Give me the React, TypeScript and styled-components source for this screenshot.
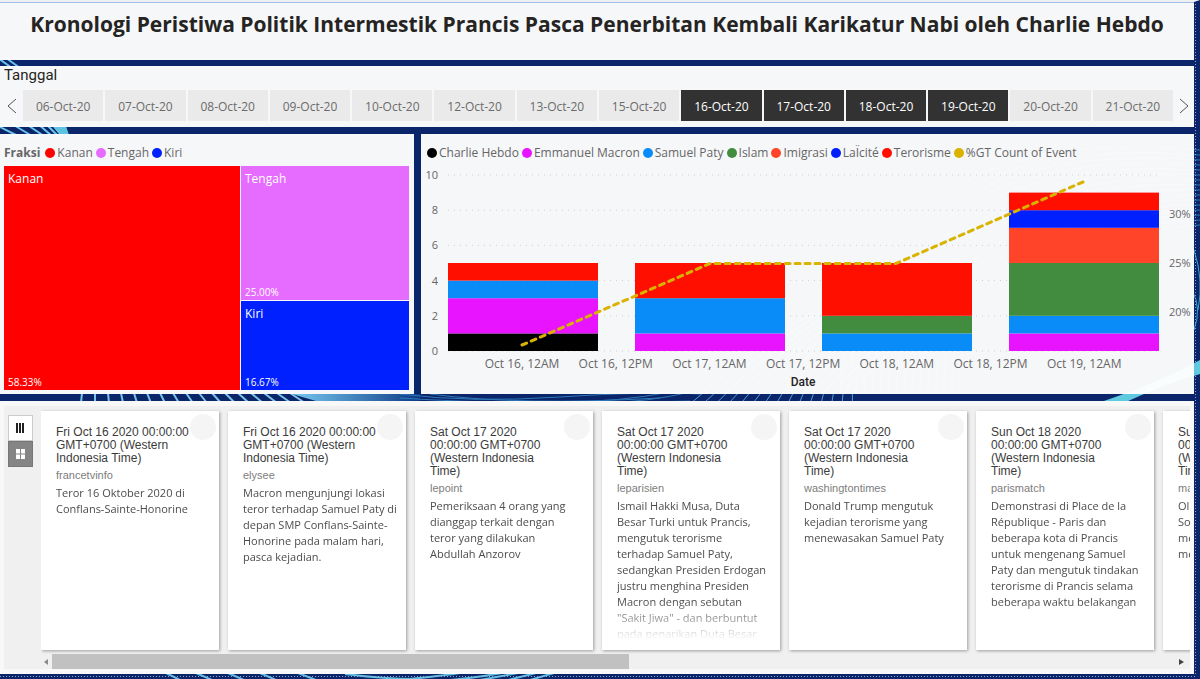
import React from "react";
import styled, { createGlobalStyle } from "styled-components";

const sans = `"Open Sans", "Noto Sans", sans-serif`;
const arial = `"Liberation Sans", Arial, sans-serif`;
const din = `Roboto, "Noto Sans", sans-serif`;

const colors = {
  navy: "#0a2569",
  panel: "rgba(254, 254, 254, 0.97)",
  text: "#666666",
  red: "#ff0f00",
  magenta: "#e814ff",
  sky: "#0a8cf8",
  green: "#418c3f",
  orange: "#ff4429",
  blue: "#0020ff",
  gold: "#d9b300",
};

const GlobalStyle = createGlobalStyle`
  * { box-sizing: border-box; }
  body { margin: 0; background: ${colors.navy}; font-family: ${sans}; color: ${colors.text}; }
  h1, h2, h3, p, ul { margin: 0; padding: 0; }
  button { font: inherit; border: 0; padding: 0; cursor: pointer; }
`;

const Page = styled.main`
  position: relative;
  isolation: isolate;
  overflow: hidden;
  min-height: 100vh;
  display: flex;
  flex-direction: column;
  gap: 7px;
  padding-right: 6px;
  padding-bottom: 5px;
  background: ${colors.navy};
`;

const Backdrop = styled.svg`
  position: absolute;
  inset: 0;
  z-index: -1;
  width: 100%;
  height: 100%;
`;

const Banner = styled.header`
  height: 60px;
  margin: 0 -6px -1px 0;
  border-right: 6px solid transparent;
  border-top: 2px solid #eef0f3;
  background: ${colors.panel};
  background-clip: padding-box;
  box-shadow: inset 0 1px 0 #9fbfe6;
`;

const Title = styled.h1`
  padding-top: 7px;
  font-size: 21px;
  line-height: 30px;
  font-weight: 700;
  color: #252423;
  text-align: center;
  white-space: nowrap;
`;

const Panel = styled.section`
  background: ${colors.panel};
  min-width: 0;
`;

const DatePanel = styled(Panel)`
  padding-bottom: 6px;
`;

const DateHeading = styled.h2`
  padding-left: 4px;
  font: 400 15px/18px ${din};
  color: #252423;
  margin-bottom: 6px;
`;

const DateRow = styled.div`
  display: grid;
  grid-template-columns: 23px 1fr 21px;
  height: 31px;
`;

const Arrow = styled.button`
  display: grid;
  place-items: center;
  background: none;
`;

const Dates = styled.div`
  display: grid;
  grid-auto-flow: column;
  grid-auto-columns: 1fr;
  gap: 2px;
`;

const DateButton = styled.button<{ $on: boolean }>`
  padding-top: 2px;
  font-size: 12px;
  line-height: 29px;
  color: ${(p) => (p.$on ? "#ffffff" : "#6b6b6b")};
  background: ${(p) => (p.$on ? "#323232" : "#eaeaea")};
`;

const Charts = styled.div`
  display: grid;
  grid-template-columns: 414fr 773fr;
  gap: 7px;
`;

const FractionPanel = styled(Panel)`
  display: flex;
  flex-direction: column;
  padding: 9px 5px 4px 4px;
`;

const EventPanel = styled(Panel)`
  padding-top: 9px;
`;

const Legend = styled.ul<{ $indent?: number }>`
  display: flex;
  align-items: center;
  gap: 3px;
  height: 20px;
  margin-bottom: 1px;
  padding-left: ${(p) => p.$indent ?? 0}px;
  font-size: 12px;
  line-height: 18px;
  list-style: none;
  white-space: nowrap;
`;

const LegendTitle = styled.li`
  font-weight: 700;
  margin-right: 2px;
`;

const LegendItem = styled.li<{ $color: string }>`
  display: flex;
  align-items: center;
  gap: 2px;
  &::before {
    content: "";
    width: 10px;
    height: 10px;
    border-radius: 50%;
    background: ${(p) => p.$color};
  }
`;

const Treemap = styled.div`
  flex: 1;
  display: grid;
  grid-template-columns: 236fr 168fr;
  grid-template-rows: 134fr 89fr;
  gap: 1px;
  margin-top: 2px;
`;

const Tile = styled.div<{ $color: string; $tall?: boolean }>`
  grid-row: ${(p) => (p.$tall ? "span 2" : "auto")};
  display: flex;
  flex-direction: column;
  justify-content: space-between;
  padding: 4px 4px 0;
  background: ${(p) => p.$color};
  color: #ffffff;
  font-size: 12px;
  line-height: 18px;
`;

const Share = styled.span`
  font-size: 10px;
  line-height: 16px;
`;

const Chart = styled.svg`
  display: block;
  width: 100%;
  height: auto;
  font-family: ${sans};
  font-size: 12px;
  fill: ${colors.text};
`;

const EventsPanel = styled(Panel)`
  flex: 1;
  padding: 5px 4px;
  background: #f8f8f9;
`;

const Events = styled.div`
  display: grid;
  grid-template-columns: 37px minmax(0, 1fr);
  height: 100%;
  background: #f0f0f0;
`;

const Modes = styled.div`
  padding: 9px 0 0 4px;
  display: flex;
  flex-direction: column;
`;

const ModeButton = styled.button<{ $on?: boolean }>`
  display: grid;
  place-items: center;
  width: 25px;
  height: 26px;
  border: 1px solid ${(p) => (p.$on ? "#777777" : "#cccccc")};
  background: ${(p) => (p.$on ? "#858585" : "#ffffff")};
`;

const Deck = styled.div`
  display: flex;
  flex-direction: column;
  justify-content: space-between;
`;

const Cards = styled.div`
  display: flex;
  gap: 9px;
  height: 248px;
  padding-top: 5px;
  overflow: hidden;
`;

const Card = styled.article`
  position: relative;
  flex: 0 0 178px;
  min-width: 0;
  height: 239px;
  display: flex;
  flex-direction: column;
  gap: 3px;
  padding: 15px 8px 10px 15px;
  background: #ffffff;
  box-shadow: 1px 1px 3px rgba(0, 0, 0, 0.35);
  white-space: pre;
`;

const Badge = styled.span`
  position: absolute;
  top: 3px;
  right: 3px;
  width: 26px;
  height: 26px;
  border-radius: 50%;
  background: #f5f5f5;
`;

const CardTitle = styled.h3`
  position: relative;
  font: 400 12px/13px ${arial};
  color: #3b3b3b;
`;

const Source = styled.p`
  font: 400 11px/14px ${arial};
  color: #7d7d7d;
`;

const Body = styled.p`
  flex: 1;
  min-height: 0;
  overflow: hidden;
  font-size: 11px;
  line-height: 16px;
  color: #4c4c4c;
  mask-image: linear-gradient(#000 calc(100% - 38px), transparent 100%);
`;

const Scrollbar = styled.div`
  display: grid;
  grid-template-columns: 11px 577fr 544fr 17px;
  height: 15px;
`;

const Thumb = styled.div`
  background: #c1c1c1;
`;

const Step = styled.button`
  display: grid;
  place-items: center;
  background: none;
`;

const dates = ["06", "07", "08", "09", "10", "12", "13", "15", "16", "17", "18", "19", "20", "21"];
const selected = ["16", "17", "18", "19"];

const topics: [string, string][] = [
  ["Charlie Hebdo", "#000000"],
  ["Emmanuel Macron", colors.magenta],
  ["Samuel Paty", colors.sky],
  ["Islam", colors.green],
  ["Imigrasi", colors.orange],
  ["LaÏcité", colors.blue],
  ["Terorisme", colors.red],
  ["%GT Count of Event", colors.gold],
];

const columns: { x: number; parts: [number, string][] }[] = [
  { x: 27, parts: [[1, "#000000"], [2, colors.magenta], [1, colors.sky], [1, colors.red]] },
  { x: 214, parts: [[1, colors.magenta], [2, colors.sky], [2, colors.red]] },
  { x: 401, parts: [[1, colors.sky], [1, colors.green], [3, colors.red]] },
  {
    x: 588,
    parts: [[1, colors.magenta], [1, colors.sky], [3, colors.green], [2, colors.orange], [1, colors.blue], [1, colors.red]],
  },
];

const ticks = ["Oct 16, 12AM", "Oct 16, 12PM", "Oct 17, 12AM", "Oct 17, 12PM", "Oct 18, 12AM", "Oct 18, 12PM", "Oct 19, 12AM"];

const fri = "Fri Oct 16 2020 00:00:00\nGMT+0700 (Western\nIndonesia Time)";
const sat = "Sat Oct 17 2020\n00:00:00 GMT+0700\n(Western Indonesia\nTime)";
const sun = "Sun Oct 18 2020\n00:00:00 GMT+0700\n(Western Indonesia\nTime)";

const events = [
  { title: fri, source: "francetvinfo", body: "Teror 16 Oktober 2020 di\nConflans-Sainte-Honorine" },
  {
    title: fri,
    source: "elysee",
    body: "Macron mengunjungi lokasi\nteror terhadap Samuel Paty di\ndepan SMP Conflans-Sainte-\nHonorine pada malam hari,\npasca kejadian.",
  },
  { title: sat, source: "lepoint", body: "Pemeriksaan 4 orang yang\ndianggap terkait dengan\nteror yang dilakukan\nAbdullah Anzorov" },
  {
    title: sat,
    source: "leparisien",
    body: "Ismail Hakki Musa, Duta\nBesar Turki untuk Prancis,\nmengutuk terorisme\nterhadap Samuel Paty,\nsedangkan Presiden Erdogan\njustru menghina Presiden\nMacron dengan sebutan\n\"Sakit Jiwa\" - dan berbuntut\npada penarikan Duta Besar",
  },
  { title: sat, source: "washingtontimes", body: "Donald Trump mengutuk\nkejadian terorisme yang\nmenewasakan Samuel Paty" },
  {
    title: sun,
    source: "parismatch",
    body: "Demonstrasi di Place de la\nRépublique - Paris dan\nbeberapa kota di Prancis\nuntuk mengenang Samuel\nPaty dan mengutuk tindakan\nterorisme di Prancis selama\nbeberapa waktu belakangan",
  },
  { title: sun, source: "marianne", body: "Olivier\nSoal\nmengenai\nmengenang" },
];

const range = (n: number) => Array.from({ length: n }, (_, i) => i);

function Waves() {
  return (
    <Backdrop viewBox="0 0 1200 679" preserveAspectRatio="none" fill="none" aria-hidden="true">
      <defs>
        <linearGradient id="glow" x1="300" x2="420" y1="0" y2="0" gradientUnits="userSpaceOnUse">
          <stop offset="0" stopColor="#6fc0ea" />
          <stop offset="1" stopColor="#0d3a86" />
        </linearGradient>
      </defs>
      <g stroke="#6cc6ea" strokeWidth="2">
        <path d="M-2 58l14 10M6 58l14 10M-6 124l24 12M12 124l20 12M26 124l18 12M38 124l14 12M46 124l12 12M52 124l10 12" />
      </g>
      <path d="M54 126l12 0 3 9h-8z" fill="#5cc4de" />
      <g stroke="#7cc4e6" strokeWidth="2">
        {range(17).map((i) => (
          <path key={i} d={`M${82 + i * 13} 393l${i - 1} 10`} />
        ))}
      </g>
      <g stroke="#4f9fd0" strokeWidth="1">
        {range(15).map((i) => (
          <path key={i} d={`M${690 + i * 13 - i * i * 0.1} 404l${14 - i} -12Q${760 + i * 10} 340 ${900 + i * 6} 260`} />
        ))}
      </g>
      <path d="M292 394H420V401H316Z" fill="url(#glow)" />
      <g stroke="#2f78b8" strokeWidth="1">
        <path d="M400 394Q470 403 560 397T700 394M430 394Q520 406 660 398M400 398Q520 406 690 401M560 402Q620 402 670 392M600 403Q650 402 690 392" />
        {range(16).map((i) => (
          <path key={i} d={`M${840 + i * 8} 392Q${860 + i * 6} ${120 + i * 8} 1200 ${150 + i * 5}`} />
        ))}
      </g>
      <path d="M1101 402Q1160 382 1200 360V374Q1160 386 1126 402Z" fill="#5fcbe0" />
      <g stroke="#3aa7d2" strokeWidth="1">
        <path d="M1194 250q10 30 4 60M1192 290q10 18 2 40" />
      </g>
      <g stroke="#62bfe2" strokeWidth="2">
        <path d="M166 673l14 7M196 673l16 7M228 673l16 7M260 673l16 7M298 673l18 7M345 674q40 5 70 5M400 680q40 -4 60 -7M450 680q24 -2 52 -7M480 680l38 -7M508 680l28 -7M530 680l24 -7" />
      </g>
      <path d="M1195.500 4V676M0 676.500H1195" stroke="#8fa3cf" strokeDasharray="1 2" />
    </Backdrop>
  );
}

function EventChart() {
  return (
    <Chart viewBox="0 0 773 230" role="img" aria-label="Events per date">
      {[0, 2, 4, 6, 8, 10].map((v) => (
        <g key={v}>
          <path d={`M27 ${187 - v * 17.6}H738`} stroke="#cfcfcf" strokeDasharray="1 5" />
          <text x="17" y={191 - v * 17.6} textAnchor="end" fontSize="11">{v}</text>
        </g>
      ))}
      {columns.map((c) => {
        let sum = 0;
        return c.parts.map(([n, color], i) => {
          sum += n;
          return <rect key={`${c.x}-${i}`} x={c.x} y={187 - sum * 17.6} width="150" height={n * 17.6} fill={color} />;
        });
      })}
      <path d="M101 181L289 99.500H475L662 18" fill="none" stroke={colors.gold} strokeWidth="3" strokeDasharray="5 5" strokeLinecap="round" />
      {["30%", "25%", "20%"].map((t, i) => (
        <text key={t} x="748" y={54 + i * 49} fontSize="11">{t}</text>
      ))}
      {ticks.map((t, i) => (
        <text key={t} x={101 + i * 93.7} y="204" textAnchor="middle">{t}</text>
      ))}
      <text x="382" y="222" textAnchor="middle" fontFamily="Roboto, sans-serif" fontSize="12" fontWeight="500" fill="#252423">
        Date
      </text>
    </Chart>
  );
}

export default function App() {
  return (
    <Page>
      <GlobalStyle />
      <Waves />
      <Banner>
        <Title>Kronologi Peristiwa Politik Intermestik Prancis Pasca Penerbitan Kembali Karikatur Nabi oleh Charlie Hebdo</Title>
      </Banner>
      <DatePanel>
        <DateHeading>Tanggal</DateHeading>
        <DateRow>
          <Arrow aria-label="Earlier dates">
            <svg width="10" height="16" fill="none" stroke="#555"><path d="M9 1L1 8l8 7" /></svg>
          </Arrow>
          <Dates>
            {dates.map((d) => (
              <DateButton key={d} $on={selected.includes(d)} aria-pressed={selected.includes(d)}>{`${d}-Oct-20`}</DateButton>
            ))}
          </Dates>
          <Arrow aria-label="Later dates">
            <svg width="10" height="16" fill="none" stroke="#555"><path d="M1 1l8 7-8 7" /></svg>
          </Arrow>
        </DateRow>
      </DatePanel>
      <Charts>
        <FractionPanel>
          <Legend>
            <LegendTitle>Fraksi</LegendTitle>
            <LegendItem $color="#ff0000">Kanan</LegendItem>
            <LegendItem $color="#e66cff">Tengah</LegendItem>
            <LegendItem $color={colors.blue}>Kiri</LegendItem>
          </Legend>
          <Treemap>
            <Tile $color="#ff0000" $tall>Kanan<Share>58.33%</Share></Tile>
            <Tile $color="#e66cff">Tengah<Share>25.00%</Share></Tile>
            <Tile $color={colors.blue}>Kiri<Share>16.67%</Share></Tile>
          </Treemap>
        </FractionPanel>
        <EventPanel>
          <Legend $indent={6}>
            {topics.map(([name, color]) => (
              <LegendItem key={name} $color={color}>{name}</LegendItem>
            ))}
          </Legend>
          <EventChart />
        </EventPanel>
      </Charts>
      <EventsPanel>
        <Events>
          <Modes>
            <ModeButton aria-label="Row view">
              <svg width="9" height="10" fill="#222"><path d="M0 0h2v10H0zM3 0h2v10H3zM6 0h2v10H6z" /></svg>
            </ModeButton>
            <ModeButton $on aria-label="Card view">
              <svg width="9" height="10" fill="#fff"><path d="M0 0h4v4.500H0zM5 0h4v4.500H5zM0 5.500h4V10H0zM5 5.500h4V10H5z" /></svg>
            </ModeButton>
          </Modes>
          <Deck>
            <Cards>
              {events.map((e, i) => (
                <Card key={i}>
                  <Badge />
                  <CardTitle>{e.title}</CardTitle>
                  <Source>{e.source}</Source>
                  <Body>{e.body}</Body>
                </Card>
              ))}
            </Cards>
            <Scrollbar>
              <Step aria-label="Scroll left">
                <svg width="5" height="8" fill="#8a8a8a"><path d="M4 1v6L0 4z" /></svg>
              </Step>
              <Thumb />
              <span />
              <Step aria-label="Scroll right">
                <svg width="5" height="8" fill="#444"><path d="M0 1v6l5-3z" /></svg>
              </Step>
            </Scrollbar>
          </Deck>
        </Events>
      </EventsPanel>
    </Page>
  );
}
